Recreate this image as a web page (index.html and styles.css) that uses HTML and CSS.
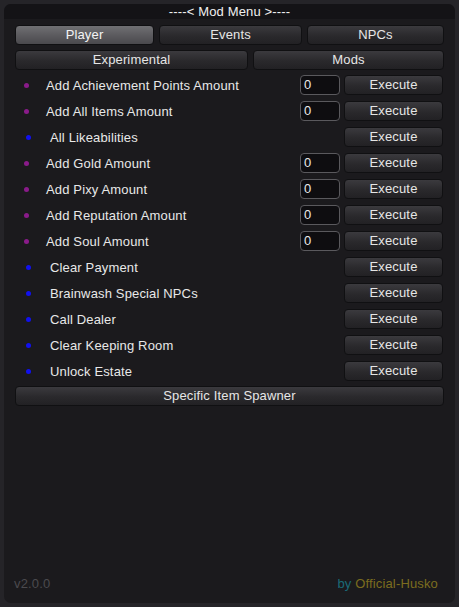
FILE: index.html
```html
<!DOCTYPE html>
<html>
<head>
<meta charset="utf-8">
<link rel="stylesheet" href="styles.css">
</head>
<body>
<div class="window">
  <div class="title">----&lt; Mod Menu &gt;----</div>
  <div class="content">
    <div class="tabs three">
      <button class="btn active">Player</button>
      <button class="btn">Events</button>
      <button class="btn">NPCs</button>
    </div>
    <div class="tabs two">
      <button class="btn">Experimental</button>
      <button class="btn">Mods</button>
    </div>
    <div class="list">
      <div class="row"><span class="dot purple"></span><span class="label">Add Achievement Points Amount</span><span class="input">0</span><button class="btn exec">Execute</button></div>
      <div class="row"><span class="dot purple"></span><span class="label">Add All Items Amount</span><span class="input">0</span><button class="btn exec">Execute</button></div>
      <div class="row"><span class="dot blue"></span><span class="label">All Likeabilities</span><button class="btn exec">Execute</button></div>
      <div class="row"><span class="dot purple"></span><span class="label">Add Gold Amount</span><span class="input">0</span><button class="btn exec">Execute</button></div>
      <div class="row"><span class="dot purple"></span><span class="label">Add Pixy Amount</span><span class="input">0</span><button class="btn exec">Execute</button></div>
      <div class="row"><span class="dot purple"></span><span class="label">Add Reputation Amount</span><span class="input">0</span><button class="btn exec">Execute</button></div>
      <div class="row"><span class="dot purple"></span><span class="label">Add Soul Amount</span><span class="input">0</span><button class="btn exec">Execute</button></div>
      <div class="row"><span class="dot blue"></span><span class="label">Clear Payment</span><button class="btn exec">Execute</button></div>
      <div class="row"><span class="dot blue"></span><span class="label">Brainwash Special NPCs</span><button class="btn exec">Execute</button></div>
      <div class="row"><span class="dot blue"></span><span class="label">Call Dealer</span><button class="btn exec">Execute</button></div>
      <div class="row"><span class="dot blue"></span><span class="label">Clear Keeping Room</span><button class="btn exec">Execute</button></div>
      <div class="row"><span class="dot blue"></span><span class="label">Unlock Estate</span><button class="btn exec">Execute</button></div>
    </div>
    <button class="btn wide">Specific Item Spawner</button>
    <div class="spacer"></div>
    <div class="footer">
      <span class="version">v2.0.0</span>
      <span class="credit"><span class="by">by</span> Official-Husko</span>
    </div>
  </div>
</div>
</body>
</html>
```
FILE: styles.css
```css
html, body {
  margin: 0;
  padding: 0;
  background: #252428;
  width: 459px;
  height: 607px;
  overflow: hidden;
}
body {
  font-family: "Liberation Sans", Arial, sans-serif;
  font-size: 13px;
  letter-spacing: 0.15px;
  color: #e6e6e6;
}
.window {
  position: relative;
  margin: 4px;
  width: 451px;
  height: 599px;
  background: #1b1a1d;
  border-radius: 7px;
  display: flex;
  flex-direction: column;
  overflow: hidden;
}
.title {
  height: 15px;
  line-height: 15px;
  background: #141316;
  text-align: center;
  color: #f0f0f0;
  font-size: 13px;
}
.content {
  flex: 1;
  display: flex;
  flex-direction: column;
  padding: 6px 12px 0 11px;
}
.btn {
  font-family: "Liberation Sans", Arial, sans-serif;
  font-size: 13px;
  letter-spacing: 0.15px;
  color: #e6e6e6;
  border: 1px solid #101012;
  border-radius: 4px;
  background: linear-gradient(#3b3a3e, #2a292c 55%, #222124);
  height: 20px;
  padding: 0;
  line-height: 18px;
  text-align: center;
  box-sizing: border-box;
}
.btn.active {
  background: linear-gradient(#707073, #5c5b5f 50%, #4a494d);
  color: #f4f4f4;
}
.tabs {
  display: grid;
  gap: 5px;
  margin-bottom: 5px;
}
.tabs.three {
  grid-template-columns: 139px 143px 137px;
}
.tabs.two {
  grid-template-columns: 233px 191px;
}
.list {
  display: flex;
  flex-direction: column;
  margin-top: -3px;
}
.row {
  height: 26px;
  display: flex;
  align-items: center;
  position: relative;
}
.dot {
  width: 5px;
  height: 5px;
  border-radius: 50%;
  flex: none;
}
.dot.purple {
  background: #8a1b8a;
  margin-left: 9px;
  margin-right: 17px;
}
.dot.blue {
  background: #1111ee;
  margin-left: 11px;
  margin-right: 19px;
}
.label {
  flex: 1;
  color: #e8e8e8;
}
.input {
  width: 40px;
  height: 20px;
  box-sizing: border-box;
  border: 1px solid #5a595d;
  border-radius: 4px;
  background: #0e0d10;
  color: #eaeaea;
  padding-left: 3px;
  line-height: 18px;
  margin-right: 4px;
}
.exec {
  width: 99px;
  height: 20px;
  flex: none;
}
.wide {
  width: 429px;
  margin-top: 2px;
}
.spacer {
  flex: 1;
}
.footer {
  display: flex;
  justify-content: space-between;
  padding: 0 5px 12px 0;
  margin-left: -1px;
  font-size: 13px;
}
.version {
  color: #4b4a4e;
}
.credit {
  color: #7b6d1f;
}
.by {
  color: #1a6a78;
}
```
